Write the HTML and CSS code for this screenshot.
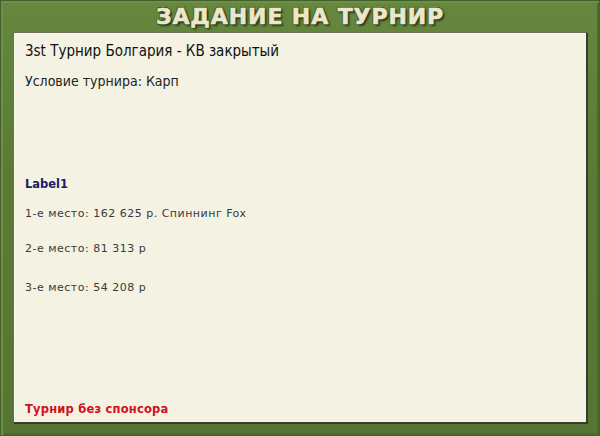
FILE: index.html
```html
<!DOCTYPE html>
<html lang="ru">
<head>
    <meta charset="UTF-8">
    <title>Задание на турнир</title>
    <link rel="stylesheet" href="styles.css">
</head>
<body>
    <div class="frame">
        <div class="header">
            <h1 class="title">ЗАДАНИЕ НА ТУРНИР</h1>
        </div>
        <div class="panel">
            <div class="tour-name">3st Турнир Болгария - КВ закрытый</div>
            <div class="tour-cond">Условие турнира: Карп</div>
            <div class="label">Label1</div>
            <div class="prize first">1-е место: 162 625 р. Спиннинг Fox</div>
            <div class="prize second">2-е место: 81 313 р</div>
            <div class="prize third">3-е место: 54 208 р</div>
            <div class="sponsor">Турнир без спонсора</div>
        </div>
    </div>
</body>
</html>
```

FILE: styles.css
```css
html, body {
    margin: 0;
    padding: 0;
}
body {
    width: 600px;
    height: 436px;
    background: #5a7a34;
    font-family: "DejaVu Sans", Verdana, sans-serif;
}
.frame {
    box-sizing: border-box;
    width: 600px;
    height: 436px;
    padding: 0 12px 12px 12px;
    border: 1px solid #44602a;
    background: linear-gradient(to bottom, #66873e 0%, #5b7b35 40%, #567532 100%);
    box-shadow: inset 2px 2px 0 #6e8f46, inset -2px -2px 0 #4c6a2c;
    display: flex;
    flex-direction: column;
}
.header {
    height: 31px;
    display: flex;
    align-items: center;
    justify-content: center;
}
.title {
    margin: 0;
    font-family: "DejaVu Sans", sans-serif;
    font-weight: bold;
    font-size: 22px;
    letter-spacing: 0.9px;
    color: #ebe7cc;
    -webkit-text-stroke: 0.6px #ebe7cc;
    text-shadow: 1px 1px 0 #2f431a, -1px -1px 0 #3f5824, 1px -1px 0 #3f5824, -1px 1px 0 #3f5824, 2px 2px 2px #26361a;
}
.panel {
    flex: 1;
    background: #f4f2e2;
    border: 1px solid #3e4034;
    border-top-color: #6b6b5a;
    border-left-color: #6b6b5a;
    box-shadow: inset 1px 1px 0 #fbfaf0, 1px 1px 0 #2e3a22;
    padding: 9px 11px 0 11px;
    display: flex;
    flex-direction: column;
}
.tour-name {
    font-family: "DejaVu Sans Condensed", "DejaVu Sans", sans-serif;
    font-size: 15px;
    color: #111;
    line-height: 18px;
}
.tour-cond {
    margin-top: 12px;
    font-family: "DejaVu Sans Condensed", "DejaVu Sans", sans-serif;
    font-size: 14px;
    color: #222;
    line-height: 18px;
}
.label {
    margin-top: 87px;
    font-size: 11.5px;
    font-weight: bold;
    color: #1b1a6b;
    line-height: 14px;
}
.prize {
    font-size: 11px;
    letter-spacing: 0.5px;
    color: #3a3a3a;
    line-height: 14px;
}
.prize.first {
    margin-top: 16px;
}
.prize.second {
    margin-top: 21px;
}
.prize.third {
    margin-top: 25px;
}
.sponsor {
    margin-top: auto;
    margin-bottom: 6px;
    font-size: 11.5px;
    letter-spacing: 0.2px;
    font-weight: bold;
    color: #d0101c;
    line-height: 14px;
}
```
